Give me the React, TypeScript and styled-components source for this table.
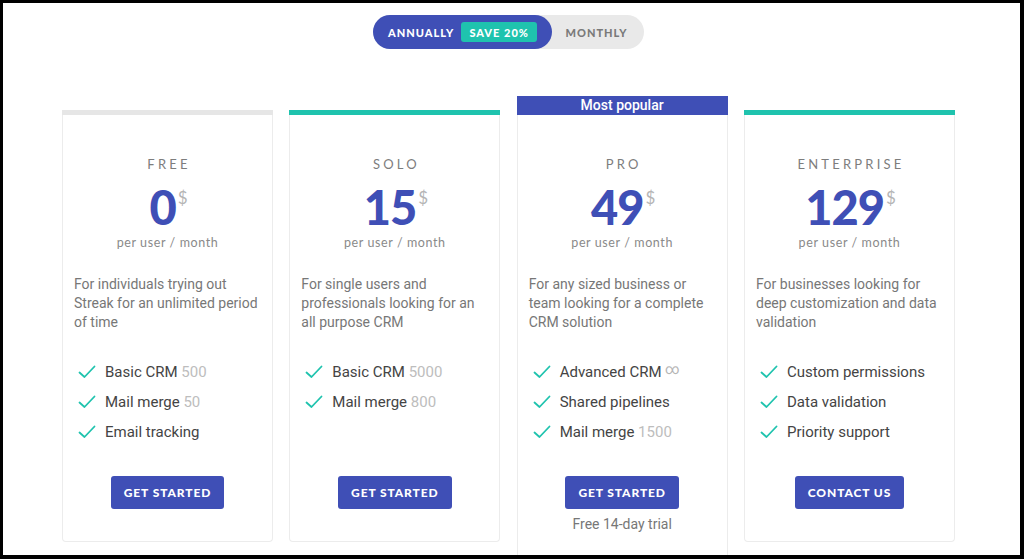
import React from "react";
import styled, { createGlobalStyle } from "styled-components";

const Global = createGlobalStyle`
  html, body { margin: 0; padding: 0; background: #fff; }
  body { font-family: Roboto, "Liberation Sans", sans-serif; }
  * { box-sizing: border-box; }
`;

const BLUE = "#3f4fb6";
const TEAL = "#1fc3ae";

const Frame = styled.div`
  width: 1024px;
  height: 559px;
  border-style: solid;
  border-color: #000;
  border-width: 3px 4px 4px 3px;
  overflow: hidden;
  background: #fff;
`;

const Content = styled.div`
  width: 892px;
  margin-left: 59px;
  display: flex;
  flex-direction: column;
  align-items: center;
`;

const Toggle = styled.div`
  margin-top: 12px;
  margin-left: 1px;
  width: 271px;
  height: 34px;
  border-radius: 17px;
  background: #e9e9e9;
  display: flex;
  align-items: center;
`;

const ActivePill = styled.div`
  height: 34px;
  width: 179px;
  border-radius: 17px;
  background: ${BLUE};
  display: flex;
  align-items: center;
  padding-left: 15px;
  gap: 7px;
`;

const ToggleLabel = styled.span<{ $active?: boolean }>`
  font-family: Lato, "Open Sans", sans-serif;
  font-weight: 900;
  font-size: 11px;
  letter-spacing: 1px;
  color: ${(p) => (p.$active ? "#fff" : "#7a7a7a")};
`;

const MonthlyLabel = styled(ToggleLabel)`
  flex: 1;
  text-align: center;
  padding-right: 3px;
`;

const SaveBadge = styled.span`
  font-family: Lato, "Open Sans", sans-serif;
  font-weight: 900;
  font-size: 11px;
  letter-spacing: 1px;
  color: #fff;
  background: ${TEAL};
  height: 20px;
  width: 76px;
  border-radius: 3px;
  display: inline-flex;
  align-items: center;
  justify-content: center;
`;

const Row = styled.div`
  margin-top: 47px;
  width: 892px;
  display: grid;
  grid-template-columns: repeat(4, 211px);
  column-gap: 16.33px;
  align-items: start;
`;

const Card = styled.div`
  display: flex;
  flex-direction: column;
`;

const TopBar = styled.div<{ $color: string }>`
  margin-top: 14px;
  height: 5px;
  background: ${(p) => p.$color};
`;

const PopularHeader = styled.div`
  height: 19px;
  background: ${BLUE};
  color: #fff;
  font-family: Roboto, sans-serif;
  font-weight: 500;
  font-size: 14px;
  line-height: 19px;
  text-align: center;
`;

const Body = styled.div<{ $tall?: boolean }>`
  border: 1px solid #ececec;
  border-top: none;
  border-radius: 0 0 4px 4px;
  padding: 41px 11px ${(p) => (p.$tall ? "60px" : "32px")} 11px;
  display: flex;
  flex-direction: column;
  align-items: center;
`;

const PlanName = styled.div`
  font-family: Lato, "Open Sans", sans-serif;
  font-weight: 400;
  font-size: 13px;
  line-height: 16px;
  letter-spacing: 3.2px;
  color: #7d7d7d;
  padding-left: 3px;
`;

const PriceLine = styled.div`
  margin-top: 11px;
  display: flex;
  align-items: flex-start;
  padding-left: 2px;
`;

const Amount = styled.span`
  font-family: Lato, "Open Sans", sans-serif;
  font-weight: 900;
  font-size: 47px;
  line-height: 48px;
  color: ${BLUE};
  letter-spacing: -1px;
`;

const Currency = styled.span`
  font-family: Lato, sans-serif;
  font-size: 17px;
  color: #b5b5b5;
  margin-left: 2px;
  margin-top: 4px;
`;

const Per = styled.div`
  margin-top: 4px;
  font-family: Lato, "Open Sans", sans-serif;
  font-size: 12.5px;
  line-height: 16px;
  letter-spacing: 0.6px;
  color: #8a8a8a;
`;

const Description = styled.p`
  align-self: stretch;
  margin: 24px 0 0 0;
  font-size: 14px;
  line-height: 19px;
  color: #777;
  height: 57px;
`;

const Features = styled.ul`
  align-self: stretch;
  list-style: none;
  margin: 25px 0 0 0;
  padding: 0 0 0 4px;
  min-height: 90px;
`;

const Feature = styled.li`
  display: flex;
  align-items: center;
  height: 30px;
  font-size: 15px;
  color: #444;
  gap: 9px;
`;

const Extra = styled.span`
  color: #bdbdbd;
`;

const Infinity = styled.span`
  color: #b5b5b5;
  font-size: 14px;
  position: relative;
  top: -3px;
`;

const Button = styled.button`
  margin-top: 29px;
  height: 33px;
  padding: 0 13px;
  border: none;
  border-radius: 3px;
  background: ${BLUE};
  color: #fff;
  font-family: Lato, "Open Sans", sans-serif;
  font-weight: 900;
  font-size: 12px;
  letter-spacing: 0.9px;
  cursor: pointer;
`;

const Trial = styled.div`
  margin-top: 6px;
  font-size: 14px;
  line-height: 19px;
  color: #777;
`;

const Check = () => (
  <svg width="18" height="14" viewBox="0 0 18 14" fill="none">
    <path d="M1.5 7.5 L6.5 12 L16.5 1.5" stroke={TEAL} strokeWidth="1.8" strokeLinecap="round" strokeLinejoin="round" />
  </svg>
);

type Feat = { label: string; extra?: string; infinity?: boolean };
type Plan = {
  name: string;
  price: string;
  desc: string;
  features: Feat[];
  cta: string;
  bar?: string;
  popular?: boolean;
};

const plans: Plan[] = [
  {
    name: "FREE",
    price: "0",
    desc: "For individuals trying out Streak for an unlimited period of time",
    features: [
      { label: "Basic CRM", extra: "500" },
      { label: "Mail merge", extra: "50" },
      { label: "Email tracking" },
    ],
    cta: "GET STARTED",
    bar: "#e6e6e6",
  },
  {
    name: "SOLO",
    price: "15",
    desc: "For single users and professionals looking for an all purpose CRM",
    features: [
      { label: "Basic CRM", extra: "5000" },
      { label: "Mail merge", extra: "800" },
    ],
    cta: "GET STARTED",
    bar: TEAL,
  },
  {
    name: "PRO",
    price: "49",
    desc: "For any sized business or team looking for a complete CRM solution",
    features: [
      { label: "Advanced CRM", infinity: true },
      { label: "Shared pipelines" },
      { label: "Mail merge", extra: "1500" },
    ],
    cta: "GET STARTED",
    popular: true,
  },
  {
    name: "ENTERPRISE",
    price: "129",
    desc: "For businesses looking for deep customization and data validation",
    features: [
      { label: "Custom permissions" },
      { label: "Data validation" },
      { label: "Priority support" },
    ],
    cta: "CONTACT US",
    bar: TEAL,
  },
];

export default function App() {
  return (
    <Frame>
      <Global />
      <Content>
        <Toggle>
          <ActivePill>
            <ToggleLabel $active>ANNUALLY</ToggleLabel>
            <SaveBadge>SAVE 20%</SaveBadge>
          </ActivePill>
          <MonthlyLabel>MONTHLY</MonthlyLabel>
        </Toggle>
        <Row>
          {plans.map((p) => (
            <Card key={p.name}>
              {p.popular ? <PopularHeader>Most popular</PopularHeader> : <TopBar $color={p.bar!} />}
              <Body $tall={p.popular}>
                <PlanName>{p.name}</PlanName>
                <PriceLine>
                  <Amount>{p.price}</Amount>
                  <Currency>$</Currency>
                </PriceLine>
                <Per>per user / month</Per>
                <Description>{p.desc}</Description>
                <Features>
                  {p.features.map((f) => (
                    <Feature key={f.label}>
                      <Check />
                      <span>
                        {f.label}
                        {f.extra && <Extra> {f.extra}</Extra>}
                        {f.infinity && <Infinity> ∞</Infinity>}
                      </span>
                    </Feature>
                  ))}
                </Features>
                <Button>{p.cta}</Button>
                {p.popular && <Trial>Free 14-day trial</Trial>}
              </Body>
            </Card>
          ))}
        </Row>
      </Content>
    </Frame>
  );
}
